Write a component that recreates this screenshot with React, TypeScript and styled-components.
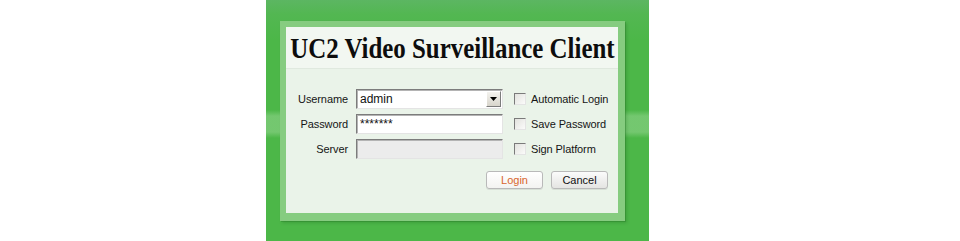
import React from "react";
import styled, { createGlobalStyle } from "styled-components";

const Global = createGlobalStyle`
  html, body { margin: 0; padding: 0; background: #ffffff; }
  body { width: 960px; height: 241px; overflow: hidden; }
  * { box-sizing: border-box; }
`;

const Page = styled.div`
  display: flex;
  width: 960px;
  height: 241px;
  padding-left: 266px;
`;

const Backdrop = styled.div`
  width: 383px;
  height: 241px;
  padding: 21px 24px 20px 14px;
  background:
    linear-gradient(to bottom,
      rgba(255,255,255,0) 0px,
      rgba(255,255,255,0) 110px,
      rgba(190,230,185,0.35) 116px,
      rgba(190,230,185,0.35) 132px,
      rgba(255,255,255,0) 138px),
    linear-gradient(to bottom, #5cb662 0px, #53b752 14px, #4cb748 40px, #4cb748 100%);
`;

const Frame = styled.div`
  width: 100%;
  height: 100%;
  padding: 6px 7px 8px 6px;
  background: #86cc80;
  box-shadow: 1px 1px 0 rgba(40, 120, 40, 0.35), 2px 2px 3px rgba(0, 60, 0, 0.18);
`;

const Panel = styled.div`
  width: 100%;
  height: 100%;
  display: flex;
  flex-direction: column;
  background: #eaf3e9;
`;

const TitleBar = styled.div`
  height: 42px;
  display: flex;
  align-items: center;
  justify-content: center;
  padding-top: 1px;
  background: #f2f7f1;
  border-bottom: 1px solid #e0e9df;
`;

const Title = styled.h1`
  margin: 0;
  font-family: "Liberation Serif", "Times New Roman", serif;
  font-weight: bold;
  font-size: 30px;
  line-height: 30px;
  color: #0d0d0d;
  white-space: nowrap;
  transform: scaleX(0.83);
`;

const Form = styled.div`
  display: grid;
  grid-template-columns: 62px 147px 12px auto;
  grid-auto-rows: 20px;
  column-gap: 8px;
  row-gap: 5px;
  align-items: center;
  margin-top: 20px;
  font-family: "Liberation Sans", Arial, sans-serif;
  font-size: 11px;
  letter-spacing: -0.1px;
  color: #151515;
`;

const Label = styled.label`
  justify-self: end;
  white-space: nowrap;
`;

const Field = styled.div<{ $disabled?: boolean }>`
  height: 20px;
  display: flex;
  align-items: center;
  padding-left: 3px;
  background: ${(p) => (p.$disabled ? "#ececec" : "#ffffff")};
  border-top: 1px solid #7c7c7c;
  border-left: 1px solid #7c7c7c;
  border-right: 1px solid #e4e4e4;
  border-bottom: 1px solid #e4e4e4;
  box-shadow: inset 1px 1px 0 #b4b4b4;
  font-size: 12px;
  letter-spacing: 0;
  color: #111;
`;

const FieldText = styled.span`
  flex: 1;
`;

const DropButton = styled.div`
  width: 15px;
  height: 16px;
  margin-right: 1px;
  display: flex;
  align-items: center;
  justify-content: center;
  background: linear-gradient(#f4f3ef, #d8d5cc);
  border-top: 1px solid #ffffff;
  border-left: 1px solid #ffffff;
  border-right: 1px solid #7c7c7c;
  border-bottom: 1px solid #7c7c7c;
`;

const Check = styled.span`
  margin-left: 3px;
  width: 12px;
  height: 12px;
  background: linear-gradient(135deg, #e2e2de, #fbfbfa);
  border-top: 1px solid #7a7a7a;
  border-left: 1px solid #7a7a7a;
  border-right: 1px solid #e4e4e4;
  border-bottom: 1px solid #e4e4e4;
`;

const CheckLabel = styled.span`
  white-space: nowrap;
  margin-left: 0px;
`;

const Buttons = styled.div`
  display: flex;
  justify-content: flex-end;
  gap: 8px;
  margin-top: 12px;
  padding-right: 10px;
`;

const Button = styled.button<{ $primary?: boolean }>`
  width: 57px;
  height: 18px;
  padding: 0;
  border: 1px solid #b9b9b9;
  border-radius: 3px;
  background: ${(p) =>
    p.$primary ? "linear-gradient(#ffffff, #f3f3f1)" : "linear-gradient(#fbfbfb, #e4e4e2)"};
  box-shadow: 0 1px 0 rgba(0, 0, 0, 0.08);
  font-family: "Liberation Sans", Arial, sans-serif;
  font-size: 11px;
  color: ${(p) => (p.$primary ? "#d9652c" : "#111")};
`;

const Arrow = () => (
  <svg width="7" height="4" viewBox="0 0 7 4">
    <path d="M0 0 H7 L3.5 4 Z" fill="#000" />
  </svg>
);

export default function App() {
  return (
    <>
      <Global />
      <Page>
        <Backdrop>
          <Frame>
            <Panel>
              <TitleBar>
                <Title>UC2 Video Surveillance Client</Title>
              </TitleBar>
              <Form>
                <Label>Username</Label>
                <Field>
                  <FieldText>admin</FieldText>
                  <DropButton>
                    <Arrow />
                  </DropButton>
                </Field>
                <Check />
                <CheckLabel>Automatic Login</CheckLabel>

                <Label>Password</Label>
                <Field>
                  <FieldText>*******</FieldText>
                </Field>
                <Check />
                <CheckLabel>Save Password</CheckLabel>

                <Label>Server</Label>
                <Field $disabled>
                  <FieldText />
                </Field>
                <Check />
                <CheckLabel>Sign Platform</CheckLabel>
              </Form>
              <Buttons>
                <Button $primary>Login</Button>
                <Button>Cancel</Button>
              </Buttons>
            </Panel>
          </Frame>
        </Backdrop>
      </Page>
    </>
  );
}
